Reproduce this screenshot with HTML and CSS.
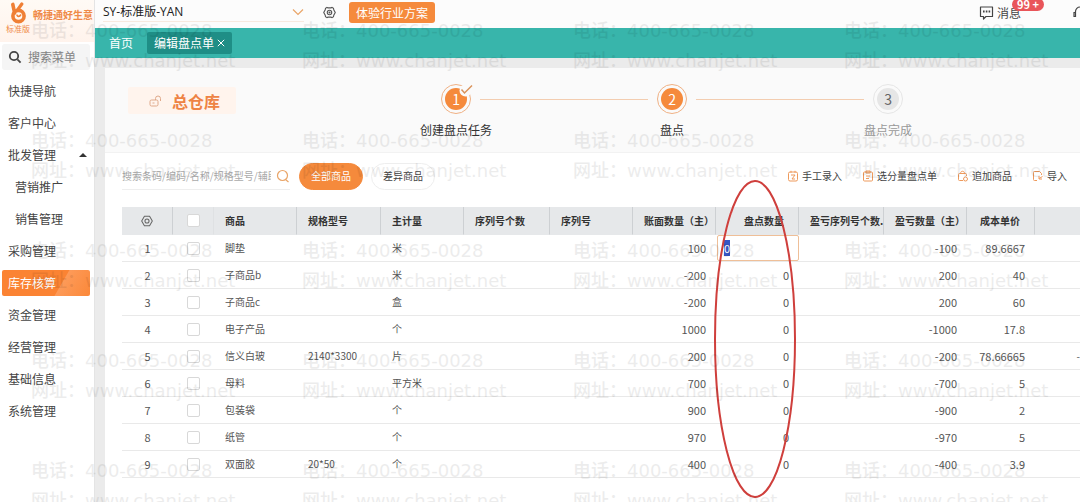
FILE: index.html
```html
<!DOCTYPE html>
<html lang="zh">
<head>
    <meta charset="UTF-8">
    <meta name="viewport" content="width=device-width, initial-scale=1.0">
    <title>编辑盘点单</title>
    <link rel="stylesheet" href="styles.css">
</head>
<body>

    <div class="app">
        <!-- 左侧菜单 -->
        <aside class="sidebar">
            <div class="brand">
                <div class="brand-logo">
                    <svg width="18" height="22" viewBox="0 0 18 22" fill="none" stroke="#ef7f35" stroke-linecap="round">
                        <path d="M3.800 2.400L5.600 11" stroke-width="3.600"/>
                        <path d="M12.800 2L8.500 8" stroke-width="3.200"/>
                        <circle cx="9.500" cy="14" r="5.600" stroke-width="3.600"/>
                        <path d="M8 13.200c.6 1.600 2.600 1.600 3.600-.2" stroke-width="1.600"/>
                    </svg>
                    <span>标准版</span>
                </div>
                <span class="brand-slogan">畅捷通好生意</span>
            </div>
            <label class="menu-search">
                <svg width="14" height="14" viewBox="0 0 14 14" fill="none" stroke="#444" stroke-width="1.8">
                    <circle cx="6" cy="6" r="4.200"/>
                    <path d="M9.400 9.400L12.600 12.600"/>
                </svg>
                <input type="text" placeholder="搜索菜单" aria-label="搜索菜单">
            </label>
            <nav class="menu">
                <a href="#">快捷导航</a>
                <a href="#">客户中心</a>
                <a href="#">批发管理<i class="arrow-up"></i></a>
                <a href="#" class="sub">营销推广</a>
                <a href="#" class="sub">销售管理</a>
                <a href="#">采购管理</a>
                <a href="#" class="active">库存核算</a>
                <a href="#">资金管理</a>
                <a href="#">经营管理</a>
                <a href="#">基础信息</a>
                <a href="#">系统管理</a>
            </nav>
        </aside>

        <div class="main">
            <!-- 顶部栏 -->
            <header class="topbar">
                <button class="company" type="button">
                    SY-标准版-YAN
                    <svg width="12" height="8" viewBox="0 0 12 8" fill="none" stroke="#e9a568" stroke-width="1.2"><path d="M1 1.500l5 5 5-5"/></svg>
                </button>
                <button class="icon-btn" type="button" aria-label="设置">
                    <svg width="13" height="13" viewBox="0 0 14 14" fill="none" stroke="#555" stroke-width="1.200">
                        <path d="M4.300 1.500L5.500 2h3l1.200-.5 1.600 1 .3 1.600L13.200 7l-1.600 2.900-.3 1.600-1.600 1L8.500 12h-3l-1.200.5-1.600-1-.3-1.600L.8 7l1.600-2.900.3-1.600z"/>
                        <circle cx="7" cy="7" r="2.400"/>
                        <circle cx="7" cy="7" r=".5"/>
                    </svg>
                </button>
                <button class="trial" type="button">体验行业方案</button>
                <button class="message" type="button">
                    <svg width="15" height="14" viewBox="0 0 15 14" fill="none" stroke="#444" stroke-width="1.200">
                        <path d="M1.500 1h12v9.500H7L4.500 13v-2.500h-3z" stroke-linejoin="round"/>
                        <path d="M4 5.500h1.600M6.800 5.500h1.600M9.600 5.500h1.600" stroke-width="1.800"/>
                    </svg>
                    消息
                    <span class="badge">99 +</span>
                </button>
                <button class="service" type="button" aria-label="客服">
                    <svg width="14" height="14" viewBox="0 0 14 14" fill="none" stroke="#444" stroke-width="1.200">
                        <path d="M2.500 7V5.500a4.500 4.500 0 0 1 9 0V7M2.500 6.500H1v4h1.500zM11.500 6.500H13v4h-1.500zM11.500 10.500c0 1.500-1.500 2-3.500 2"/>
                    </svg>
                </button>
            </header>

            <!-- 标签页 -->
            <nav class="tabs">
                <a href="#">首页</a>
                <a href="#" class="current">编辑盘点单
                    <svg width="8" height="8" viewBox="0 0 8 8" stroke="#fff"><path d="M.8.8l6.400 6.400M7.200.8L.8 7.200"/></svg>
                </a>
            </nav>

            <main class="content">
                <!-- 盘点步骤 -->
                <section class="progress">
                    <div class="warehouse">
                        <svg width="13" height="12" viewBox="0 0 13 12" fill="none" stroke="#dfa98a">
                            <rect x="1" y="5" width="8" height="6" rx="1.500"/>
                            <path d="M6.500 5V3.500a2.500 2.500 0 0 1 5 0V6M3.500 8h2"/>
                        </svg>
                        总仓库
                    </div>
                    <ol class="steps">
                        <li class="step done">
                            <span class="ring"><b>1</b>
                                <svg class="tick" width="14" height="13" viewBox="0 0 14 13">
                                    <circle cx="6.500" cy="6.500" r="6" fill="#fafafa"/>
                                    <path d="M2.500 5.500l3 3.500L13 1.500" fill="none" stroke="#d9925a" stroke-width="1.500"/>
                                </svg>
                            </span>
                            <span class="step-name">创建盘点任务</span>
                        </li>
                        <li class="line"></li>
                        <li class="step">
                            <span class="ring"><b>2</b></span>
                            <span class="step-name">盘点</span>
                        </li>
                        <li class="line"></li>
                        <li class="step todo">
                            <span class="ring"><b>3</b></span>
                            <span class="step-name">盘点完成</span>
                        </li>
                    </ol>
                </section>

                <!-- 工具栏 -->
                <section class="toolbar">
                    <label class="goods-search">
                        <input type="text" placeholder="搜索条码/编码/名称/规格型号/辅助" aria-label="搜索商品">
                        <svg width="14" height="14" viewBox="0 0 14 14" fill="none" stroke="#e9a568" stroke-width="1.200">
                            <circle cx="6.500" cy="6.500" r="5"/>
                            <path d="M9.500 10.500l3 2.500"/>
                        </svg>
                    </label>
                    <button class="pill on" type="button">全部商品</button>
                    <button class="pill" type="button">差异商品</button>
                    <div class="actions">
                        <button type="button">
                            <svg width="10" height="12" viewBox="0 0 10 12" fill="none" stroke="#ee9a5c">
                                <rect x=".5" y="2" width="9" height="9" rx="1.500"/><path d="M3 .8v2M7 .8v2M3 5h4L4 9h3"/>
                            </svg>手工录入
                        </button>
                        <button type="button">
                            <svg width="10" height="12" viewBox="0 0 10 12" fill="none" stroke="#ee9a5c">
                                <rect x=".5" y="2" width="9" height="9" rx="1"/><path d="M3 1h4v2H3zM3 6h4M3 8.500h3"/>
                            </svg>选分量盘点单
                        </button>
                        <button type="button">
                            <svg width="10" height="12" viewBox="0 0 10 12" fill="none" stroke="#ee9a5c">
                                <path d="M5 10.500H1.500a1 1 0 0 1-1-1v-5a1 1 0 0 1 1-1h6a1 1 0 0 1 1 1V6M2.500 3.500C2.500.5 6.500.5 6.500 3.500"/><circle cx="7.500" cy="9" r="2"/>
                            </svg>追加商品
                        </button>
                        <button type="button">
                            <svg width="10" height="12" viewBox="0 0 10 12" fill="none" stroke="#ee9a5c">
                                <path d="M4 10.500H1.500a1 1 0 0 1-1-1v-7a1 1 0 0 1 1-1h5l2 2V5M9.500 6.500L6 8.500M6 6v3h3"/>
                            </svg>导入
                        </button>
                    </div>
                </section>

                <!-- 盘点明细 -->
                <section class="sheet">
                    <table class="grid">
                        <colgroup>
                            <col class="w-no"><col class="w-check"><col class="w-std"><col class="w-spec"><col class="w-std"><col class="w-serial"><col class="w-std"><col class="w-std"><col class="w-std"><col class="w-diff"><col class="w-std"><col class="w-price"><col>
                        </colgroup>
                        <thead>
                            <tr>
                                <th class="mid">
                                    <svg width="12" height="12" viewBox="0 0 14 14" fill="none" stroke="#666" stroke-width="1.200">
                                        <path d="M4 1.500h6L13.200 7 10 12.500H4L.8 7z" stroke-linejoin="round"/>
                                        <circle cx="7" cy="7" r="2.400"/>
                                    </svg>
                                </th>
                                <th class="mid soft"><input type="checkbox" aria-label="全选"></th>
                                <th>商品</th>
                                <th>规格型号</th>
                                <th>主计量</th>
                                <th>序列号个数</th>
                                <th>序列号</th>
                                <th>账面数量（主）</th>
                                <th class="num">盘点数量</th>
                                <th>盈亏序列号个数.</th>
                                <th>盈亏数量（主）</th>
                                <th class="num">成本单价</th>
                                <th></th>
                            </tr>
                        </thead>
                        <tbody>
                            <tr><td class="mid">1</td><td class="mid"><input type="checkbox" aria-label="选择第1行"></td><td>脚垫</td><td></td><td>米</td><td></td><td></td><td class="num">100</td><td class="editing"><input type="text" class="qty" value="0" aria-label="盘点数量"></td><td></td><td class="num">-100</td><td class="num">89.6667</td><td></td></tr>
                            <tr><td class="mid">2</td><td class="mid"><input type="checkbox" aria-label="选择第2行"></td><td>子商品b</td><td></td><td>米</td><td></td><td></td><td class="num">-200</td><td class="num">0</td><td></td><td class="num">200</td><td class="num">40</td><td></td></tr>
                            <tr><td class="mid">3</td><td class="mid"><input type="checkbox" aria-label="选择第3行"></td><td>子商品c</td><td></td><td>盒</td><td></td><td></td><td class="num">-200</td><td class="num">0</td><td></td><td class="num">200</td><td class="num">60</td><td></td></tr>
                            <tr><td class="mid">4</td><td class="mid"><input type="checkbox" aria-label="选择第4行"></td><td>电子产品</td><td></td><td>个</td><td></td><td></td><td class="num">1000</td><td class="num">0</td><td></td><td class="num">-1000</td><td class="num">17.8</td><td></td></tr>
                            <tr><td class="mid">5</td><td class="mid"><input type="checkbox" aria-label="选择第5行"></td><td>信义白玻</td><td>2140*3300</td><td>片</td><td></td><td></td><td class="num">200</td><td class="num">0</td><td></td><td class="num">-200</td><td class="num">78.66665</td><td class="cut">-</td></tr>
                            <tr><td class="mid">6</td><td class="mid"><input type="checkbox" aria-label="选择第6行"></td><td>母料</td><td></td><td>平方米</td><td></td><td></td><td class="num">700</td><td class="num">0</td><td></td><td class="num">-700</td><td class="num">5</td><td></td></tr>
                            <tr><td class="mid">7</td><td class="mid"><input type="checkbox" aria-label="选择第7行"></td><td>包装袋</td><td></td><td>个</td><td></td><td></td><td class="num">900</td><td class="num">0</td><td></td><td class="num">-900</td><td class="num">2</td><td></td></tr>
                            <tr><td class="mid">8</td><td class="mid"><input type="checkbox" aria-label="选择第8行"></td><td>纸管</td><td></td><td>个</td><td></td><td></td><td class="num">970</td><td class="num">0</td><td></td><td class="num">-970</td><td class="num">5</td><td></td></tr>
                            <tr><td class="mid">9</td><td class="mid"><input type="checkbox" aria-label="选择第9行"></td><td>双面胶</td><td>20*50</td><td>个</td><td></td><td></td><td class="num">400</td><td class="num">0</td><td></td><td class="num">-400</td><td class="num">3.9</td><td></td></tr>
                        </tbody>
                    </table>
                    <!-- 红圈标注 -->
                    <svg class="mark" width="84" height="320" viewBox="0 0 84 320" fill="none">
                        <ellipse cx="42" cy="160" rx="40" ry="158" stroke="#cf3f3c" stroke-width="2"/>
                    </svg>
                </section>
            </main>
        </div>
    </div>

    <!-- 水印 -->
    <div class="watermark" aria-hidden="true"></div>

    <script>
        const watermark = document.querySelector(".watermark");
        for (let i = 0; i < 20; i++) {
            const tile = document.createElement("div");
            tile.className = "tile";
            tile.innerHTML = "<div><span>电话：</span>400-665-0028</div><div><span>网址：</span>www.chanjet.net</div>";
            watermark.appendChild(tile);
        }

        // 进入页面时选中第一行的盘点数量
        document.querySelector(".qty").select();
    </script>

</body>
</html>
```
FILE: styles.css
```css
/* 全局样式 */
* {
    box-sizing: border-box;
}

body {
    margin: 0;
    background: #fff;
    color: #444;
    font-family: "Noto Sans CJK SC", sans-serif;
    font-size: 12px;
    line-height: 18px;
    overflow: hidden;
}

a {
    color: inherit;
    text-decoration: none;
}

button, input {
    margin: 0;
    padding: 0;
    border: 0;
    background: none;
    color: inherit;
    font: inherit;
    outline: none;
}

button {
    display: flex;
    align-items: center;
    white-space: nowrap;
    cursor: pointer;
}

svg {
    display: block;
    flex-shrink: 0;
}

input::placeholder {
    color: #aaa;
    opacity: 1;
}

.app {
    display: flex;
    min-height: 100vh;
}

/* 左侧菜单 */
.sidebar {
    width: 95px;
    flex-shrink: 0;
    border-right: 1px solid #e4e4e4;
}

.brand {
    display: flex;
    height: 42px;
    padding: 2px 0 0 6px;
    gap: 3px;
    background: linear-gradient(#fffaf5, #fff3ec);
    color: #ef8a48;
}

.brand-logo {
    display: flex;
    flex-direction: column;
    align-items: center;
    width: 24px;
    flex-shrink: 0;
    font-size: 8px;
    line-height: 10px;
    white-space: nowrap;
}

.brand-slogan {
    padding-top: 4px;
    font-size: 10px;
    font-weight: bold;
    white-space: nowrap;
}

.menu-search {
    display: flex;
    align-items: center;
    gap: 6px;
    height: 26px;
    margin: 2px 4px 8px 2px;
    padding-left: 6px;
    border-radius: 3px;
    background: #f5f5f5;
}

.menu-search input {
    width: 60px;
}

.menu-search input::placeholder {
    color: #888;
}

.menu a {
    display: flex;
    align-items: center;
    height: 26px;
    margin: 6px 4px 6px 2px;
    padding-left: 6px;
    border-radius: 2px;
}

.menu .sub {
    padding-left: 13px;
}

.menu .active {
    background: linear-gradient(120deg, #fb8333 65%, #fd9a58 66%, #fb8839);
    color: #fff;
}

.arrow-up {
    margin: 0 3px 0 auto;
    border: 4px solid transparent;
    border-top: 0;
    border-bottom-color: #333;
}

/* 顶部栏 */
.main {
    display: flex;
    flex-direction: column;
    flex: 1;
    min-width: 0;
}

.topbar {
    display: flex;
    align-items: flex-start;
    height: 28px;
    padding-left: 8px;
    background: #fcfcfc;
    overflow: hidden;
}

.company {
    justify-content: space-between;
    width: 201px;
    height: 22px;
    padding-top: 3px;
    border-bottom: 1px solid #f7e9df;
    color: #222;
    font-family: "Open Sans", "Noto Sans CJK SC", sans-serif;
}

.icon-btn {
    height: 25px;
    margin: 0 13px 0 19px;
}

.trial {
    height: 21px;
    margin-top: 2px;
    padding: 0 7px;
    border-radius: 3px;
    background: #f58a3c;
    color: #fff;
}

.message {
    position: relative;
    height: 25px;
    margin-left: auto;
    gap: 3px;
}

.badge {
    position: absolute;
    left: 33px;
    top: -2px;
    padding: 0 5px;
    border-radius: 7px;
    background: #e9555a;
    color: #fff;
    font-size: 11px;
    font-weight: bold;
    line-height: 13px;
}

.service {
    width: 7px;
    height: 25px;
    margin-left: 52px;
    overflow: hidden;
}

/* 标签页 */
.tabs {
    display: flex;
    align-items: center;
    gap: 7px;
    height: 30px;
    padding-left: 7px;
    background: #38b5ab;
    color: #fff;
}

.tabs a {
    display: flex;
    align-items: center;
    gap: 3px;
    height: 22px;
    padding: 0 7px;
    border-radius: 2px;
}

.tabs .current {
    background: #1f8e86;
}

/* 内容区 */
.content {
    flex: 1;
    border-top: 10px solid #ebebeb;
    border-left: 10px solid #ebebeb;
}

.progress {
    display: flex;
    align-items: flex-start;
    height: 85px;
    padding: 14px 23px 0;
    border-bottom: 1px solid #f2f2f2;
    background: #fafafa;
}

.warehouse {
    display: flex;
    align-items: center;
    gap: 10px;
    height: 27px;
    margin-top: 5px;
    padding: 0 16px 0 21px;
    border-radius: 2px;
    background: #fff4ed;
    color: #ee8344;
    font-size: 16px;
    font-weight: bold;
}

/* 步骤条 */
.steps {
    display: flex;
    margin: 0 0 0 196px;
    padding: 0;
    list-style: none;
}

.step {
    display: flex;
    flex-direction: column;
    align-items: center;
    gap: 7px;
    width: 48px;
    color: #333;
    white-space: nowrap;
}

.line {
    width: 168px;
    height: 1px;
    margin-top: 17px;
    background: #f3cdb0;
}

.ring {
    position: relative;
    display: flex;
    width: 30px;
    height: 30px;
    margin-top: 2px;
    padding: 3px;
    border: 1px solid #f0b184;
    border-radius: 50%;
}

.ring b {
    flex: 1;
    border-radius: 50%;
    background: #f58a3c;
    color: #fff;
    font-size: 14px;
    font-weight: normal;
    line-height: 22px;
    text-align: center;
}

.tick {
    position: absolute;
    right: -3px;
    top: -1px;
}

.step-name {
    display: flex;
    justify-content: center;
    width: 48px;
}

.todo {
    color: #999;
}

.todo .ring {
    border-color: #e6e6e6;
}

.todo b {
    background: #e6e6e6;
    color: #666;
}

/* 工具栏 */
.toolbar {
    display: flex;
    align-items: center;
    gap: 8px;
    height: 54px;
    padding: 0 13px 8px 17px;
    font-size: 10px;
}

.goods-search {
    display: flex;
    align-items: center;
    justify-content: space-between;
    width: 168px;
    height: 27px;
    margin-right: 1px;
    border-bottom: 1px solid #eee;
}

.goods-search input {
    width: 149px;
}

.pill {
    height: 27px;
    padding: 0 11px;
    border: 1px solid #eee;
    border-radius: 14px;
}

.on {
    border-color: #f58a3c;
    background: #f58a3c;
    color: #fff;
}

.actions {
    display: flex;
    gap: 21px;
    margin-left: auto;
}

.actions button {
    gap: 4px;
}

/* 盘点明细 */
.sheet {
    position: relative;
    margin-left: 17px;
}

.grid {
    width: 100%;
    border-collapse: separate;
    border-spacing: 0;
    table-layout: fixed;
}

.w-no { width: 51px; }
.w-check { width: 41px; }
.w-std { width: 83px; }
.w-spec { width: 84px; }
.w-serial { width: 86px; }
.w-diff { width: 85px; }
.w-price { width: 68px; }

.grid th, .grid td {
    height: 27px;
    padding: 0 0 0 11px;
    border-bottom: 1px solid #e9e9e9;
    text-align: left;
    white-space: nowrap;
}

.grid th {
    height: 28px;
    border-right: 1px solid #cdd0d3;
    border-bottom-color: #e6e8ea;
    background: #e6e8ea;
    color: #333;
    font-size: 10px;
}

.grid .soft {
    border-right-color: #dfe1e3;
}

.grid th:last-child {
    border-right: 0;
}

.grid td {
    color: #555;
    font-size: 10px;
}

.grid .mid {
    padding: 0;
    text-align: center;
}

.grid .mid svg {
    margin: 0 auto;
}

.grid td.mid, .grid td.num {
    font-size: 11px;
}

.grid .num {
    padding: 0 10px 0 0;
    text-align: right;
}

.grid th.num {
    padding-right: 14px;
}

.grid .cut {
    padding: 0;
    text-align: right;
}

.grid input[type="checkbox"] {
    appearance: none;
    display: block;
    width: 13px;
    height: 13px;
    margin: 0 auto;
    border: 1px solid #d8d8d8;
    border-radius: 2px;
    background: #fff;
}

.grid .editing {
    padding: 0 0 0 1px;
}

.qty {
    display: block;
    width: 100%;
    height: 26px;
    padding-left: 6px;
    border: 1px solid #efbf98;
    border-radius: 2px;
    font-size: 11px;
}

.qty::selection {
    background: #3556c4;
    color: #fff;
}

.mark {
    position: absolute;
    left: 591px;
    top: -28px;
    pointer-events: none;
}

/* 水印 */
.watermark {
    position: absolute;
    inset: 0;
    display: grid;
    grid-template-columns: repeat(4, 271px);
    grid-auto-rows: 110px;
    padding: 15px 0 0 31px;
    color: #000;
    font-family: "DejaVu Sans", "Noto Sans CJK SC", sans-serif;
    font-size: 18px;
    line-height: 29px;
    white-space: nowrap;
    overflow: hidden;
    opacity: 0.07;
    pointer-events: none;
}

.tile span {
    font-family: "Noto Sans CJK SC", sans-serif;
    font-weight: 500;
}
```
